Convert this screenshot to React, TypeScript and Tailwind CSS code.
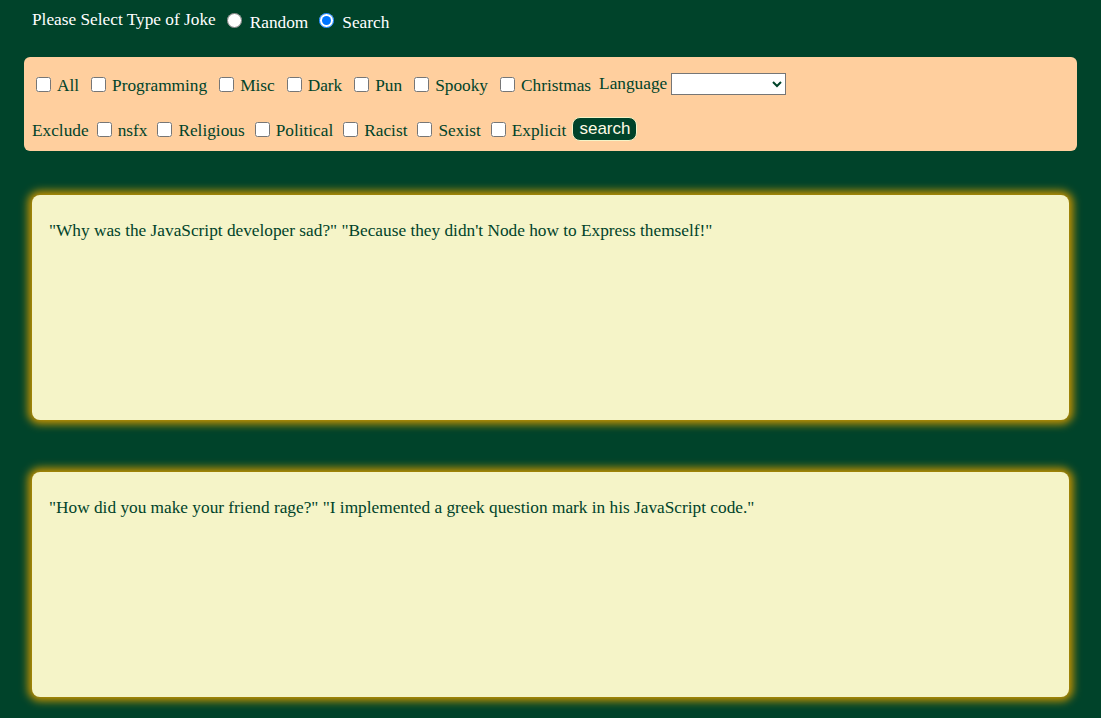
import React from 'react';

const CATEGORIES = ['All', 'Programming', 'Misc', 'Dark', 'Pun', 'Spooky', 'Christmas'];
const FLAGS = ['nsfx', 'Religious', 'Political', 'Racist', 'Sexist', 'Explicit'];

const JOKES = [
  '"Why was the JavaScript developer sad?" "Because they didn\'t Node how to Express themself!"',
  '"How did you make your friend rage?" "I implemented a greek question mark in his JavaScript code."',
];

const Check: React.FC<{ label: string; wide?: boolean }> = ({ label, wide }) => (
  <label className="flex items-center">
    <input type="checkbox" className="ml-[4px] mr-[6px] h-[15px] w-[15px]" />
    <span className={wide ? 'mr-[8px] pt-[3px]' : 'mr-[6px] pt-[3px]'}>{label}</span>
  </label>
);

export default function App() {
  return (
    <div className="min-h-[718px] bg-[#00432a] pt-[8px] font-['Liberation_Serif',serif] text-[17.3px] leading-[20px]">
      {/* joke type */}
      <div className="flex h-[24px] items-center px-8 text-white">
        <span className="mr-[11px]">Please Select Type of Joke</span>
        <input type="radio" name="type" className="mr-[8px] h-[15px] w-[15px]" />
        <span className="mr-[11px] pt-[6px]">Random</span>
        <input type="radio" name="type" defaultChecked className="mr-[8px] h-[15px] w-[15px]" />
        <span className="pt-[6px]">Search</span>
      </div>

      {/* filters */}
      <div className="mx-6 mt-[25px] rounded-md bg-[#ffcf9e] px-2 pb-[9px] pt-[14px] text-[#00432a]">
        <div className="flex h-[26px] items-center">
          {CATEGORIES.map((c) => (
            <Check key={c} label={c} wide />
          ))}
          <span className="mr-[4px]">Language</span>
          <select className="h-[22px] w-[115px] appearance-auto border border-[#767676] bg-white text-[13px]" />
        </div>
        <div className="mt-[19px] flex h-[26px] items-center">
          <span className="mr-[4px] pt-[3px]">Exclude</span>
          {FLAGS.map((f) => (
            <Check key={f} label={f} />
          ))}
          <button className="h-[24px] rounded-lg border border-[#f5f4c8] bg-[#00432a] px-[6px] font-['Liberation_Sans',sans-serif] text-[17px] leading-[20px] text-[#fffbe6]">
            search
          </button>
        </div>
      </div>

      {/* results */}
      <div className="flex flex-col gap-[52px] px-8 pb-[21px] pt-[44px]">
        {JOKES.map((j, i) => (
          <div
            key={i}
            className="h-[225px] rounded-lg bg-[#f5f4c8] px-[17px] pt-[26px] text-[#00432a] shadow-[0_0_8px_4px_#c89400]"
          >
            {j}
          </div>
        ))}
      </div>
    </div>
  );
}
